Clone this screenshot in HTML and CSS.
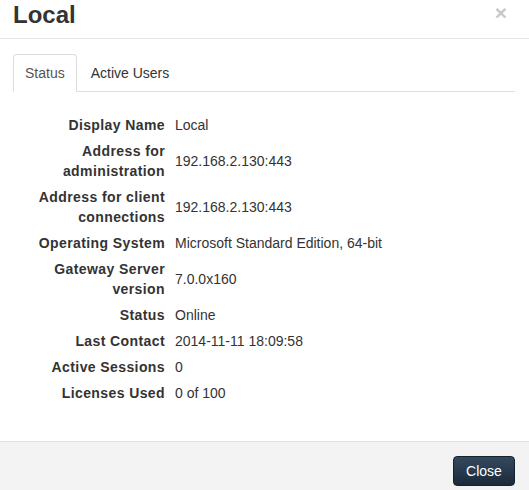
FILE: index.html
```html
<!DOCTYPE html>
<html>
<head>
<meta charset="utf-8">
<link rel="stylesheet" href="styles.css">
</head>
<body>
<div class="modal">
  <div class="modal-header">
    <h4 class="modal-title">Local</h4>
    <span class="close">&times;</span>
  </div>
  <div class="modal-body">
    <ul class="nav-tabs">
      <li class="tab active">Status</li>
      <li class="tab">Active Users</li>
    </ul>
    <dl class="details">
      <dt>Display Name</dt><dd>Local</dd>
      <dt>Address for administration</dt><dd>192.168.2.130:443</dd>
      <dt>Address for client connections</dt><dd>192.168.2.130:443</dd>
      <dt>Operating System</dt><dd>Microsoft Standard Edition, 64-bit</dd>
      <dt>Gateway Server version</dt><dd>7.0.0x160</dd>
      <dt>Status</dt><dd>Online</dd>
      <dt>Last Contact</dt><dd>2014-11-11 18:09:58</dd>
      <dt>Active Sessions</dt><dd>0</dd>
      <dt>Licenses Used</dt><dd>0 of 100</dd>
    </dl>
  </div>
  <div class="modal-footer">
    <button class="btn-close">Close</button>
  </div>
</div>
</body>
</html>
```
FILE: styles.css
```css
html, body {
  margin: 0;
  padding: 0;
  background: #ffffff;
}
body {
  font-family: "Liberation Sans", Arial, sans-serif;
  font-size: 14px;
  line-height: 20px;
  color: #333333;
}
.modal {
  display: flex;
  flex-direction: column;
  min-height: 490px;
}
.modal-header {
  display: flex;
  justify-content: space-between;
  align-items: flex-start;
  height: 39px;
  box-sizing: border-box;
  padding: 2px 22px 0 13px;
  border-bottom: 1px solid #e5e5e5;
}
.modal-title {
  margin: 0;
  font-size: 24px;
  line-height: 26.4px;
  font-weight: bold;
  color: #333333;
}
.close {
  font-size: 21px;
  font-weight: bold;
  line-height: 20px;
  color: #c8c8c8;
  margin-top: 1px;
}
.modal-body {
  padding: 15px 14px 38px 13px;
  flex: 0 0 auto;
}
.nav-tabs {
  list-style: none;
  margin: 0;
  padding: 0;
  display: flex;
  border-bottom: 1px solid #dddddd;
}
.tab {
  padding: 8px 11px;
  margin-right: 2px;
  margin-bottom: -1px;
  border: 1px solid transparent;
  border-radius: 4px 4px 0 0;
  color: #333333;
}
.tab.active {
  color: #555555;
  background: #ffffff;
  border-color: #dddddd;
  border-bottom-color: #ffffff;
}
.details {
  display: grid;
  grid-template-columns: 152px 1fr;
  column-gap: 10px;
  row-gap: 6px;
  margin: 23px 0 0 0;
  align-items: center;
}
.details dt {
  font-weight: bold;
  text-align: right;
  letter-spacing: 0.4px;
  margin: 0;
}
.details dd {
  margin: 0;
}
.modal-footer {
  flex: 1 0 auto;
  display: flex;
  justify-content: flex-end;
  align-items: flex-start;
  padding: 14px 14px 0 0;
  border-top: 1px solid #e0e0e0;
  background: #f3f3f3;
}
.btn-close {
  width: 62px;
  height: 30px;
  font-family: "Liberation Sans", Arial, sans-serif;
  font-size: 14px;
  color: #ffffff;
  background: linear-gradient(#34495f, #1b2a39);
  border: 1px solid #16222e;
  border-radius: 4px;
  padding: 0;
}
```
